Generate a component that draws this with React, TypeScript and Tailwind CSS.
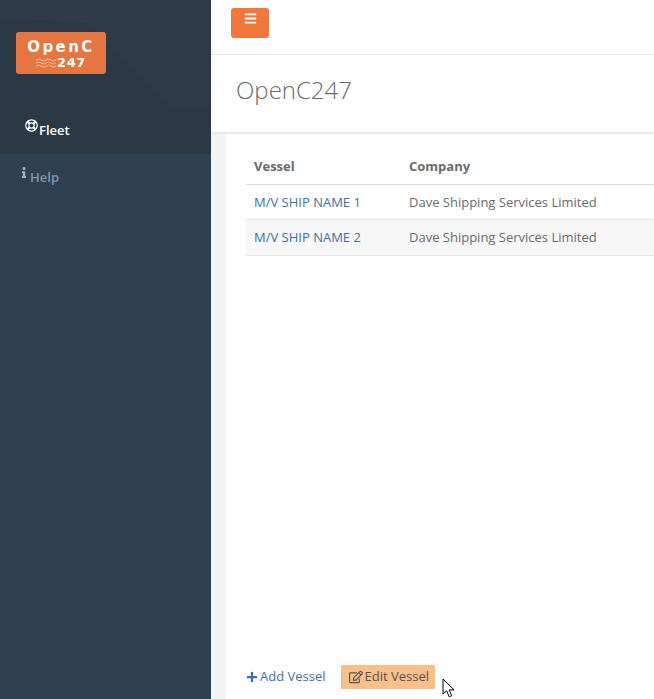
import React from 'react';
import { FaBars, FaInfo, FaPlus, FaRegEdit, FaRegLifeRing } from 'react-icons/fa';

const vessels = [
  { name: 'M/V SHIP NAME 1', company: 'Dave Shipping Services Limited', striped: false },
  { name: 'M/V SHIP NAME 2', company: 'Dave Shipping Services Limited', striped: true },
];

const App: React.FC = () => {
  return (
    <div className="flex h-[699px] w-[654px] overflow-hidden bg-white font-['Open_Sans',sans-serif] text-[13px] text-[#676a6c]">
      <aside className="flex w-[211px] shrink-0 flex-col bg-[#2f4050]">
        <div className="relative h-[154px] overflow-hidden bg-[#2b3845]">
          <svg width="211" height="154" viewBox="0 0 211 154" className="absolute inset-0">
            <polygon points="0,0 105,0 90,23 0,18" fill="#2e3c4a" />
            <polygon points="105,0 211,0 211,108 166,106 90,23" fill="#2d3a48" />
          </svg>
          <div className="relative ml-4 mt-8 flex h-[42px] w-[90px] flex-col items-center rounded-[3px] bg-[#e67540] font-['DejaVu_Sans',sans-serif] font-bold leading-none text-white">
            <span className="mt-[8px] text-[15px] leading-[15px] tracking-[2.4px]">OpenC</span>
            <div className="mt-[2px] flex items-center gap-[1px]">
              <svg width="20" height="10" viewBox="0 0 20 10">
                <path d="M0 2q2.5-2 5 0t5 0 5 0 5 0M0 5q2.5-2 5 0t5 0 5 0 5 0M0 8q2.5-2 5 0t5 0 5 0 5 0" fill="none" stroke="#f7c8ab" strokeWidth="0.9" />
              </svg>
              <span className="text-[13px] leading-[12px] tracking-[0.6px]">247</span>
            </div>
          </div>
          <div className="relative ml-[25px] mt-[45px] flex items-start">
            <FaRegLifeRing size={13} className="text-white" />
            <span className="ml-px mt-[2px] text-[13px] font-semibold leading-[18px] text-white">Fleet</span>
          </div>
        </div>
        <div className="ml-[21px] mt-3 flex items-start">
          <FaInfo size={11} className="mt-[1px] w-[6px] text-[#a7b1c2]" />
          <span className="ml-[3px] mt-[2px] text-[13px] font-semibold leading-[18px] text-[#8095af]">Help</span>
        </div>
      </aside>

      <main className="flex min-w-0 flex-1 flex-col">
        <div className="h-[55px] shrink-0 border-b border-[#e7eaec] pl-[20px] pt-2">
          <button className="flex h-[30px] w-[38px] items-start justify-center rounded-[3px] bg-[#f3763c] pt-[4px] text-white">
            <FaBars size={13} />
          </button>
        </div>
        <div className="flex h-[79px] shrink-0 items-center border-b-2 border-[#e7eaec] pl-[25px] pb-[8px]">
          <h1 className="text-2xl font-light leading-none text-[#676a6c]">OpenC247</h1>
        </div>
        <div className="flex min-h-0 flex-1 bg-[#f3f3f4] pl-[15px]">
          <div className="relative flex flex-1 flex-col bg-white pl-5 pt-[15px]">
            <table className="w-[500px] table-fixed border-collapse text-left">
              <thead>
                <tr className="h-[35px] border-b border-[#dddddd]">
                  <th className="w-[155px] pl-2 pt-[1px] font-bold">Vessel</th>
                  <th className="pl-2 pt-[1px] font-bold">Company</th>
                </tr>
              </thead>
              <tbody>
                {vessels.map((v) => (
                  <tr key={v.name} className={`border-b border-[#e7e7e7] ${v.striped ? 'h-[36px] bg-[#f7f7f7]' : 'h-[35px]'}`}>
                    <td className="pl-2 pt-[2px] text-[#3f6fa5]">{v.name}</td>
                    <td className="pl-2 pt-[2px]">{v.company}</td>
                  </tr>
                ))}
              </tbody>
            </table>
            <div className="mt-auto mb-[10px] flex items-center">
              <a className="flex items-center text-[#3f6fa5]">
                <FaPlus size={12} className="mr-[2px]" />
                Add Vessel
              </a>
              <a className="ml-[15px] flex h-6 items-center bg-[#f9bf8a] pl-2 pr-[6px] text-[#555]">
                <FaRegEdit size={14} className="mr-[2px]" />
                Edit Vessel
              </a>
            </div>
            <svg width="14" height="20" viewBox="0 0 14 20" className="absolute left-[216px] bottom-[1px]">
              <path d="M1 1v15l3.6-3.2 2.6 6 2.5-1.1-2.6-5.8h5z" fill="#fff" stroke="#000" strokeWidth="1" />
            </svg>
          </div>
        </div>
      </main>
    </div>
  );
};

export default App;
